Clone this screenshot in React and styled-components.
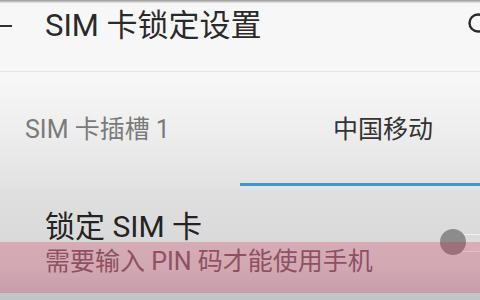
import React from "react";
import styled, { createGlobalStyle } from "styled-components";

const GlobalStyle = createGlobalStyle`
  html, body {
    margin: 0;
    padding: 0;
    background: #f7f7f7;
  }
  body {
    font-family: Roboto, "Noto Sans CJK SC", sans-serif;
  }
`;

const Screen = styled.div`
  position: relative;
  width: 480px;
  height: 300px;
  overflow: hidden;
  display: flex;
  flex-direction: column;
`;

const TopShade = styled.div`
  height: 3px;
  background: linear-gradient(#9a9a9a, #e6e6e6);
`;

const Header = styled.div`
  height: 68px;
  display: flex;
  align-items: flex-start;
  background: #f7f7f7;
  border-bottom: 1px solid #e4e4e4;
`;

const BackButton = styled.div`
  width: 45px;
  height: 46px;
  display: flex;
  align-items: center;
`;

const Title = styled.h1`
  margin: 0;
  padding-top: 5px;
  font-size: 31px;
  line-height: 36px;
  font-weight: 400;
  color: #2a2a2a;
  flex: 1;
`;

const SearchButton = styled.div`
  width: 14px;
  height: 44px;
  display: flex;
  align-items: center;
`;

const Tabs = styled.div`
  height: 117px;
  display: flex;
  background: linear-gradient(#f8f8f8 0%, #efefef 45%, #e2e2e2 100%);
`;

const Tab = styled.div`
  flex: 1;
  display: flex;
  flex-direction: column;
  justify-content: space-between;
  padding-top: 43px;
  padding-bottom: 3px;
`;

const TabLabel = styled.span`
  padding-left: ${(p) => p.$indent}px;
  font-size: 25px;
  line-height: 30px;
  color: ${(p) => (p.$active ? "#333" : "#7a7a7a")};
`;

const Indicator = styled.div`
  height: 3px;
  background: ${(p) => (p.$active ? "#4b93c7" : "transparent")};
`;

const List = styled.div`
  flex: 1;
  background: linear-gradient(#e0e0e0 0%, #d6d6d6 70%, #c2c2c6 100%);
`;

const Row = styled.div`
  display: flex;
  align-items: flex-start;
  padding: 20px 0 0 45px;
`;

const RowText = styled.div`
  flex: 1;
  display: flex;
  flex-direction: column;
`;

const RowTitle = styled.span`
  font-size: 30px;
  line-height: 36px;
  color: #232323;
`;

const RowSub = styled.span`
  font-size: 25px;
  line-height: 34px;
  color: #7a6068;
`;

const Switch = styled.div`
  position: relative;
  width: 40px;
  height: 28px;
  margin-top: 20px;
`;

const Track = styled.div`
  position: absolute;
  left: 14px;
  top: 5px;
  width: 40px;
  height: 16px;
  border-radius: 8px;
  border: 1.5px solid #f2f2f2;
  background: #dcdcdc;
`;

const Thumb = styled.div`
  position: absolute;
  left: 0;
  top: 0;
  width: 26px;
  height: 26px;
  border-radius: 50%;
  background: #8c8c8c;
`;

const Highlight = styled.div`
  position: absolute;
  left: 0;
  right: 0;
  top: 242px;
  height: 51px;
  background: rgba(200, 40, 80, 0.26);
  pointer-events: none;
`;

export default function App() {
  return (
    <>
      <GlobalStyle />
      <Screen>
        <TopShade />
        <Header>
          <BackButton>
            <svg width="12" height="4" viewBox="0 0 12 4">
              <line x1="0" y1="2" x2="12" y2="2" stroke="#333" strokeWidth="2" />
            </svg>
          </BackButton>
          <Title>SIM 卡锁定设置</Title>
          <SearchButton>
            <svg width="14" height="24" viewBox="0 0 14 24">
              <circle cx="12" cy="10" r="8.5" fill="none" stroke="#2a2a2a" strokeWidth="2.4" />
            </svg>
          </SearchButton>
        </Header>
        <Tabs>
          <Tab>
            <TabLabel $indent={25}>SIM 卡插槽 1</TabLabel>
            <Indicator />
          </Tab>
          <Tab>
            <TabLabel $indent={93} $active>
              中国移动
            </TabLabel>
            <Indicator $active />
          </Tab>
        </Tabs>
        <List>
          <Row>
            <RowText>
              <RowTitle>锁定 SIM 卡</RowTitle>
              <RowSub>需要输入 PIN 码才能使用手机</RowSub>
            </RowText>
            <Switch>
              <Track />
              <Thumb />
            </Switch>
          </Row>
        </List>
        <Highlight />
      </Screen>
    </>
  );
}
